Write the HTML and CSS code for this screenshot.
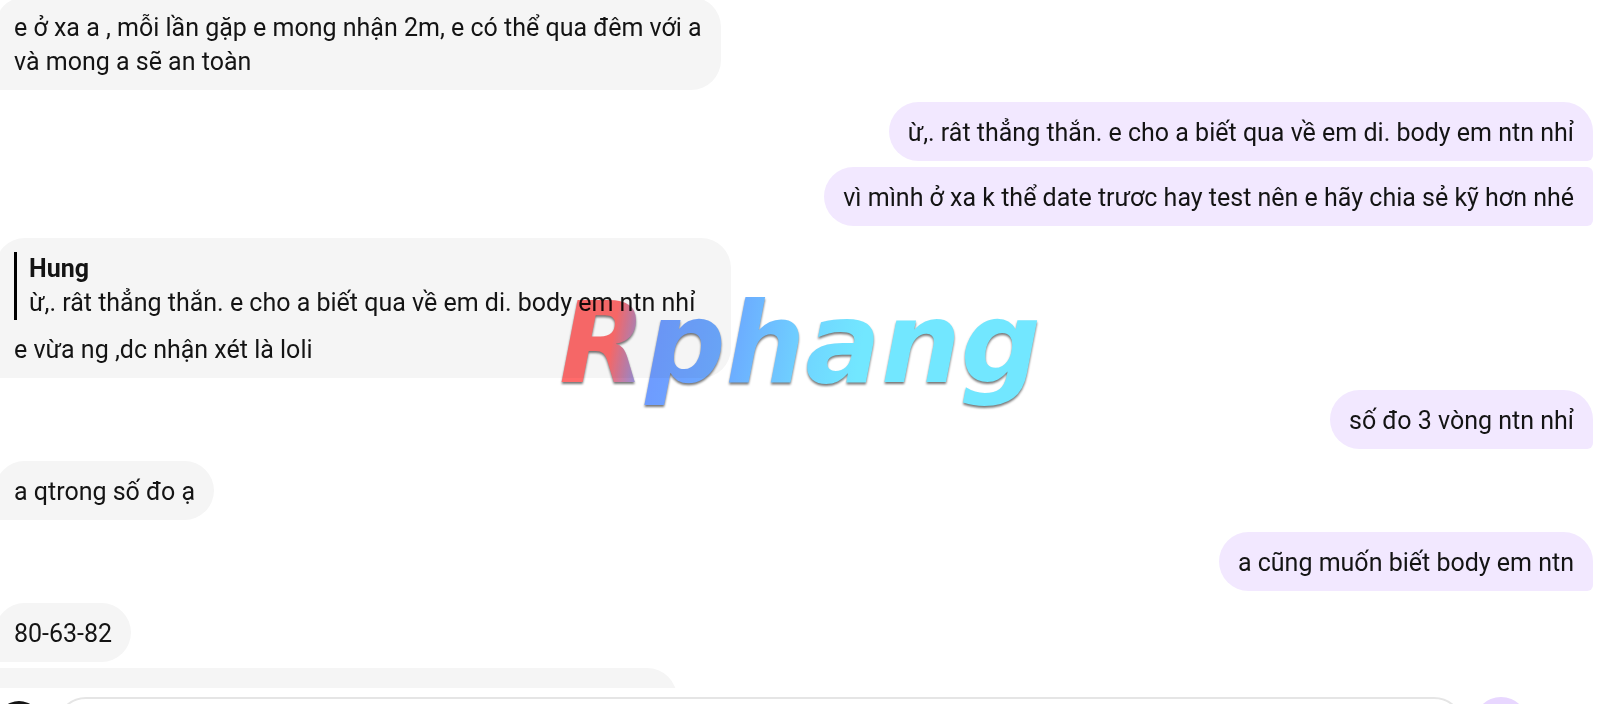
FILE: index.html
```html
<!DOCTYPE html>
<html lang="vi">
<head>
<meta charset="utf-8">
<meta name="viewport" content="width=device-width, initial-scale=1">
<title>Chat</title>
<link rel="stylesheet" href="styles.css">
</head>
<body>
<main class="messages">
  <p class="bubble received">e ở xa a , mỗi lần gặp e mong nhận 2m, e có thể qua đêm với a<br>và mong a sẽ an toàn</p>
  <p class="bubble sent">ừ,. rât thẳng thắn. e cho a biết qua về em di. body em ntn nhỉ</p>
  <p class="bubble sent follow">vì mình ở xa k thể date trươc hay test nên e hãy chia sẻ kỹ hơn nhé</p>
  <div class="bubble received">
    <blockquote class="quote">
      <strong class="quote-name">Hung</strong>
      <p class="quote-text">ừ,. rât thẳng thắn. e cho a biết qua về em di. body em ntn nhỉ</p>
    </blockquote>
    <p class="reply">e vừa ng ,dc nhận xét là loli</p>
  </div>
  <p class="bubble sent">số đo 3 vòng ntn nhỉ</p>
  <p class="bubble received">a qtrong số đo ạ</p>
  <p class="bubble sent">a cũng muốn biết body em ntn</p>
  <p class="bubble received">80-63-82</p>
  <div class="bubble received follow partial"></div>
</main>
<form class="composer">
  <button class="add" type="button" aria-label="Add"></button>
  <input class="field" type="text" aria-label="Message">
  <button class="send" type="button" aria-label="Send"></button>
</form>
<div class="watermark"><span class="wordmark">Rphang</span></div>
</body>
</html>
```
FILE: styles.css
```css
* {
  box-sizing: border-box;
}

body {
  position: relative;
  display: flex;
  flex-direction: column;
  height: 100vh;
  margin: 0;
  overflow: hidden;
  background: #fff;
  color: #141414;
  font: 25px/34px Roboto, "Noto Sans", sans-serif;
}

p,
blockquote {
  margin: 0;
}

.messages {
  display: flex;
  flex: 1;
  flex-direction: column;
  min-height: 0;
  margin: -3px 7px 0 -5px;
  overflow: hidden;
}

.bubble {
  flex: none;
  max-width: 800px;
  margin-bottom: 12px;
  padding: 14px 19px 11px;
}

.received {
  align-self: flex-start;
  border-radius: 30px 30px 30px 6px;
  background: #f5f5f5;
}

.sent {
  align-self: flex-end;
  border-radius: 30px 30px 6px 30px;
  background: #f2e8ff;
}

.bubble:has(+ .follow) {
  margin-bottom: 6px;
}

.sent.follow {
  border-top-right-radius: 6px;
}

.received.follow {
  border-top-left-radius: 6px;
}

.partial {
  width: 682px;
  height: 60px;
}

.quote {
  margin-bottom: 13px;
  padding: 0 17px 0 12px;
  border-left: 3px solid #000;
}

.quote-name {
  display: block;
}

.composer {
  display: flex;
  flex: 0 0 16px;
  align-items: flex-start;
  min-height: 0;
  padding: 9px 72px 0 0;
}

.add,
.send {
  flex: none;
  border: 0;
  border-radius: 50%;
}

.add {
  width: 44px;
  height: 44px;
  margin: 4px 15px 0 -3px;
  background: #141414;
}

.field {
  flex: 1;
  height: 60px;
  padding: 0 20px;
  border: 2px solid #e5e5e5;
  border-radius: 30px;
  background: #fff;
  font: inherit;
}

.send {
  width: 54px;
  height: 54px;
  margin-left: 10px;
  background: #e8d7ff;
}

.watermark {
  position: absolute;
  inset: 0;
  display: flex;
  align-items: center;
  justify-content: center;
  padding-bottom: 18px;
  pointer-events: none;
  mix-blend-mode: multiply;
}

.wordmark {
  padding: 0 8px;
  background: linear-gradient(100deg, #ff6b6b 14%, #6e9bff 22%, #6caeff 38%, #70d8ff 53%, #72e7ff 62%);
  background-clip: text;
  color: transparent;
  filter: drop-shadow(0 2px 1px #777);
  font: italic bold 112px/140px "DejaVu Sans", sans-serif;
}
```
